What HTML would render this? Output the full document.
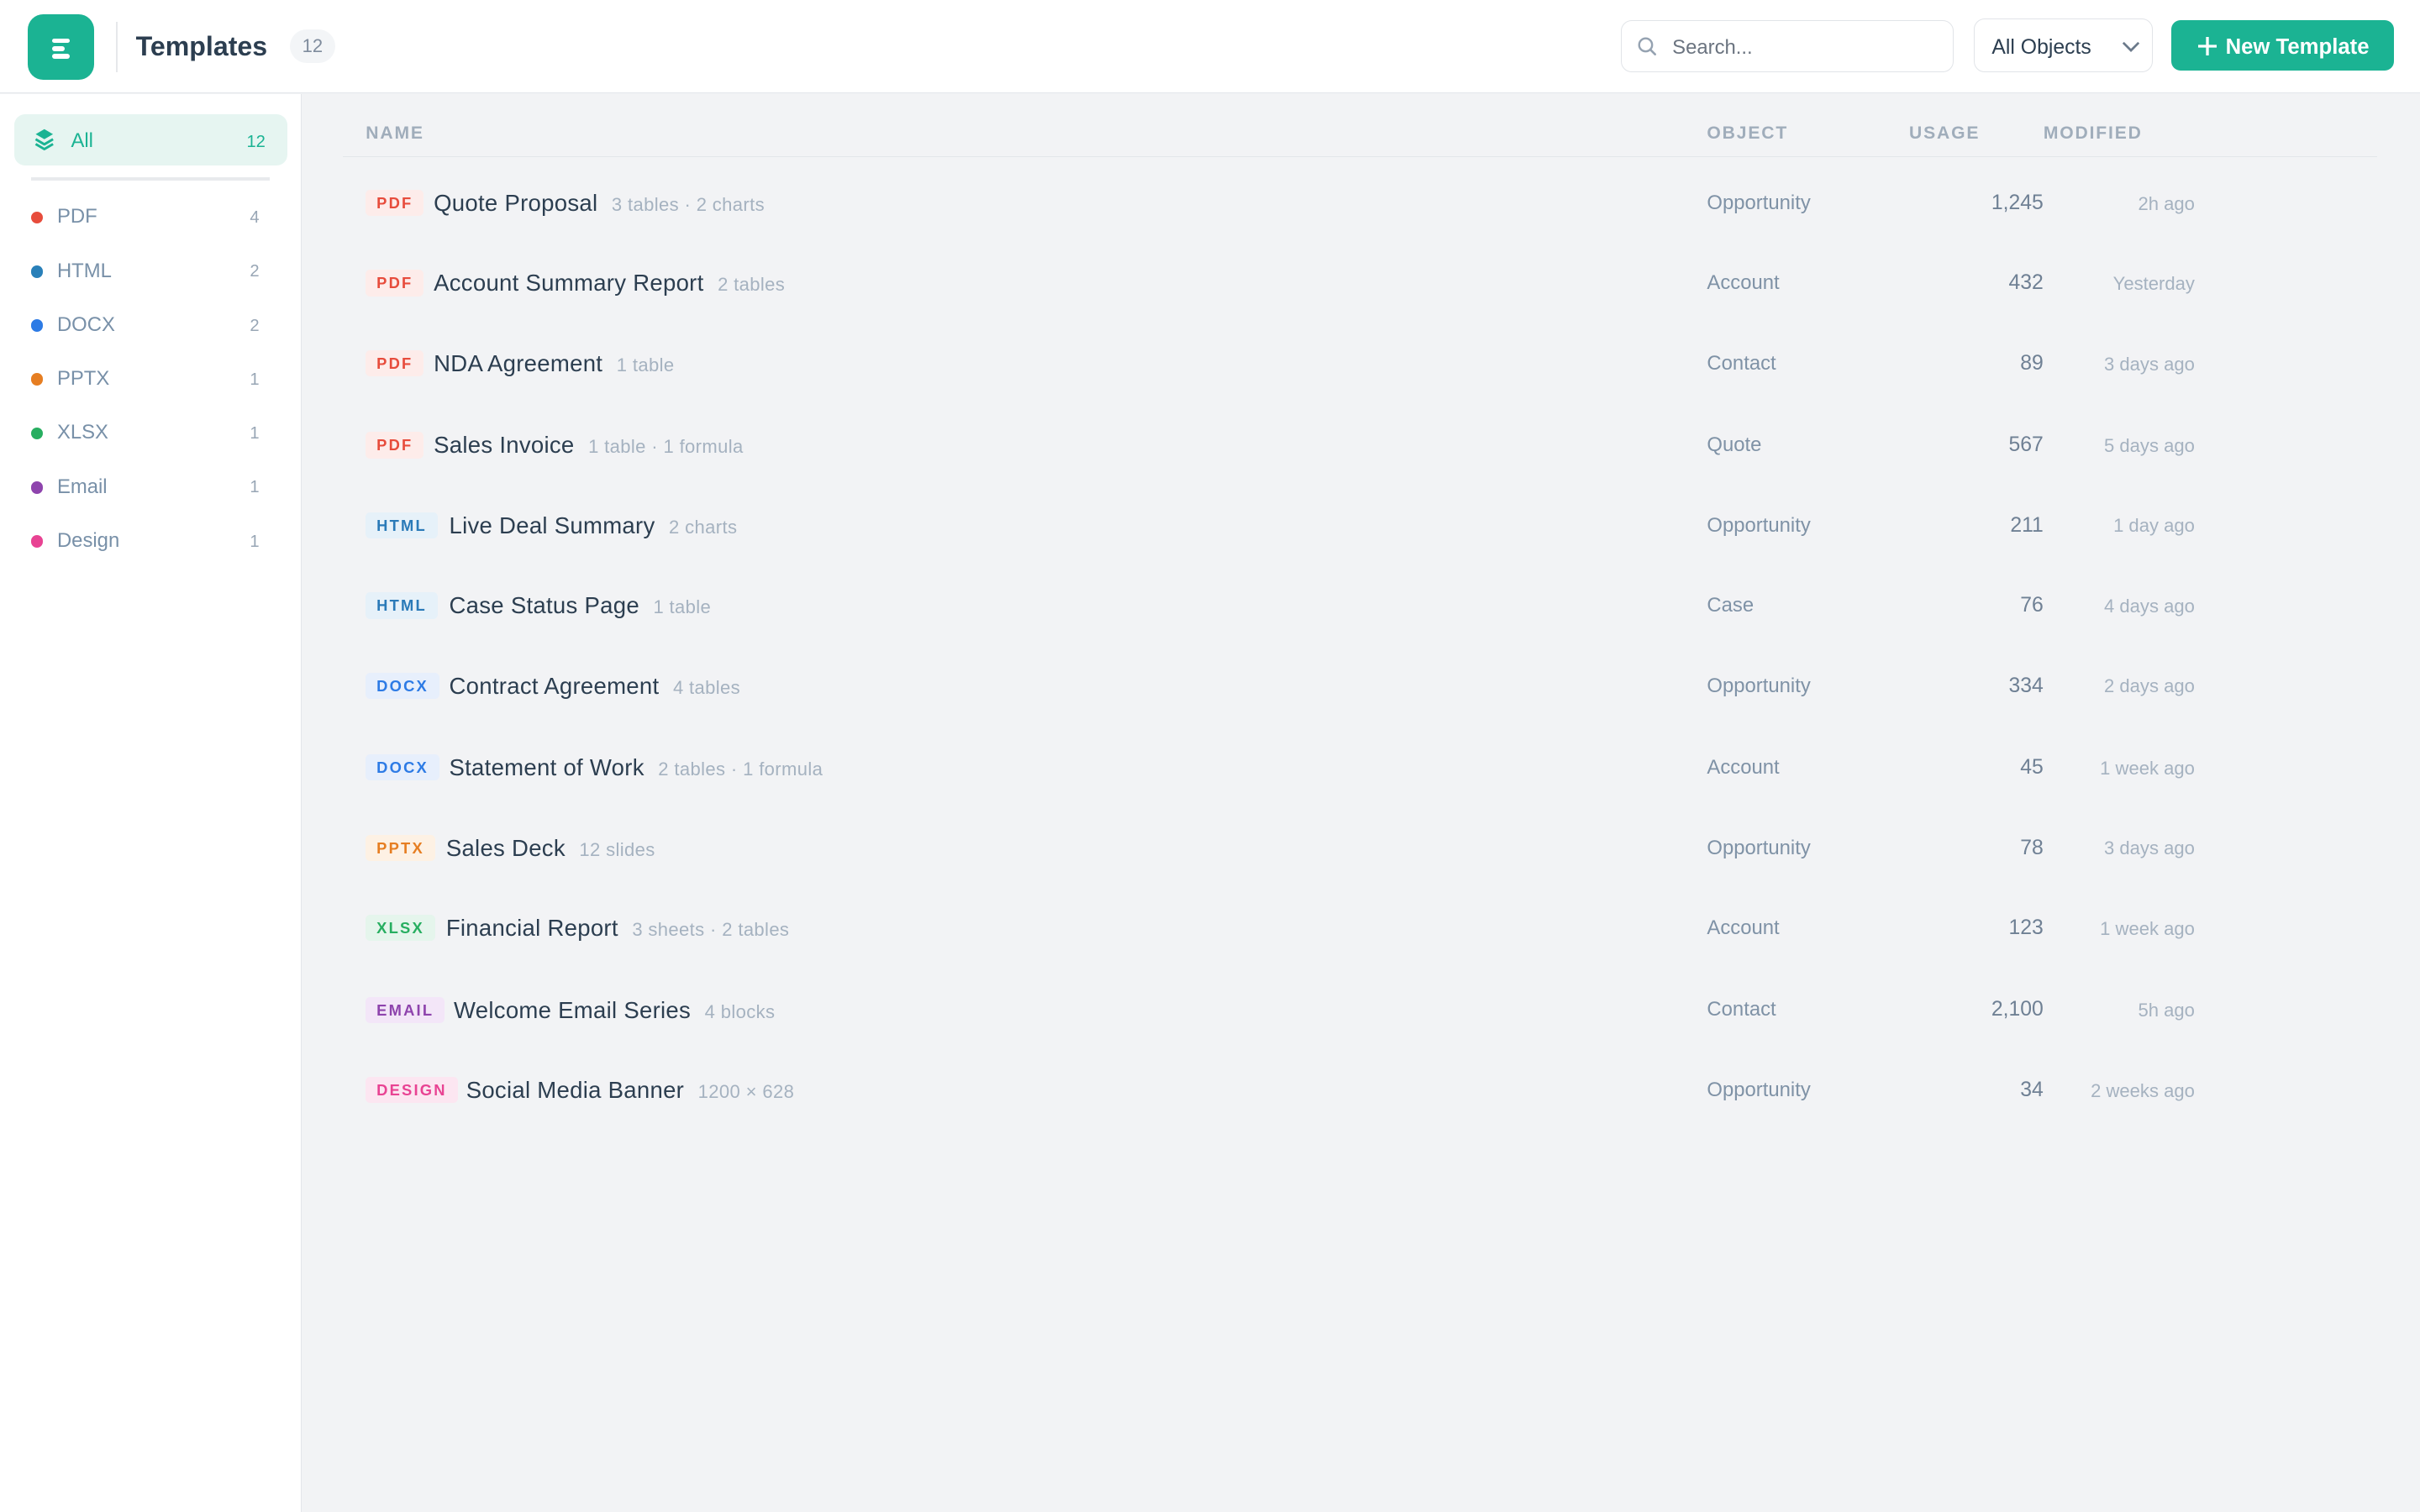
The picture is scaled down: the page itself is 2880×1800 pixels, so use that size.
<!DOCTYPE html>
<html><head><meta charset="utf-8">
<style>
html,body{margin:0;padding:0;}
body{width:1568px;height:980px;zoom:1.836735;background:#f2f3f5;font-family:"Liberation Sans",sans-serif;position:relative;overflow:hidden;color:#2c3e50;}
.top{position:absolute;left:0;top:0;width:1568px;height:60px;background:#fff;border-bottom:1px solid #e3e6ea;}
.logo{position:absolute;left:18px;top:9px;width:43px;height:43px;border-radius:10px;background:#1bb393;}
.logo i{position:absolute;left:16px;height:3px;border-radius:2px;background:#fff;}
.vsep{position:absolute;left:75px;top:14px;width:1px;height:33px;background:#e6e8eb;}
.title{position:absolute;left:88px;top:20px;font-size:17.5px;font-weight:bold;color:#2c3e50;}
.cnt{position:absolute;left:188px;top:19px;width:29px;height:22px;border-radius:11px;background:#f3f5f7;font-size:12px;color:#7f8c9d;text-align:center;line-height:22px;}
.search{position:absolute;left:1050px;top:13px;width:215px;height:33px;border:1px solid #e1e4e8;border-radius:7px;background:#fff;}
.search span{position:absolute;left:33px;top:10px;font-size:13px;color:#6b7480;}
.sel{position:absolute;left:1279px;top:12px;width:115px;height:34px;border:1px solid #e1e4e8;border-radius:7px;background:#fff;}
.sel span{position:absolute;left:11px;top:11px;font-size:13.5px;color:#2c3e50;}
.btn{position:absolute;left:1407px;top:13px;width:144px;height:33px;border-radius:6px;background:#1bb393;color:#fff;font-size:14px;font-weight:bold;}
.btn span{position:absolute;left:35px;top:10px;}
.side{position:absolute;left:0;top:61px;width:195px;height:919px;background:#fff;border-right:1px solid #e3e6ea;}
.all{position:absolute;left:9px;top:74px;width:177px;height:33px;border-radius:7px;background:#e6f5f1;}
.all .t{position:absolute;left:37px;top:10px;font-size:13px;color:#1bb393;}
.all .n{position:absolute;right:14px;top:12px;font-size:11px;color:#1bb393;}
.hsep{position:absolute;left:20px;top:115px;width:155px;height:2px;background:#e8eaed;}
.si{position:absolute;left:20px;width:150px;height:20px;}
.si b{position:absolute;left:0;top:6px;width:8px;height:8px;border-radius:50%;}
.si .t{position:absolute;left:17px;top:2px;font-size:13px;color:#7890a8;}
.si .n{position:absolute;right:2px;top:4px;font-size:11px;color:#98a6b5;}
.hd{position:absolute;top:80px;font-size:11.5px;letter-spacing:1px;color:#a0adbb;font-weight:bold;}
.hline{position:absolute;left:222px;top:101px;width:1318px;height:1px;background:#e3e6ea;}
.row{position:absolute;left:0;width:1568px;height:20px;}
.bd{position:absolute;left:237px;top:2px;height:17px;padding:0 7px;border-radius:3px;font-size:10px;font-weight:bold;letter-spacing:1.2px;line-height:17px;}
.nm{position:absolute;top:2px;font-size:15px;letter-spacing:0.15px;color:#2c3e50;white-space:nowrap;}
.nm em{font-style:normal;font-size:12px;letter-spacing:0.2px;color:#a5b2c0;margin-left:9px;}
.ob{position:absolute;left:1106px;top:3px;font-size:13px;color:#7f92a6;}
.us{position:absolute;right:244px;top:3px;font-size:13.5px;color:#6f8094;}
.md{position:absolute;right:146px;top:4px;font-size:12px;color:#a5b2c0;}
</style></head><body>
<div class="top">
<div class="logo"><i style="top:16px;width:11px"></i><i style="top:21px;width:8px"></i><i style="top:26px;width:11px"></i></div>
<div class="vsep"></div>
<div class="title">Templates</div>
<div class="cnt">12</div>
<div class="search"><svg width="14" height="14" viewBox="0 0 16 16" style="position:absolute;left:10px;top:10px"><circle cx="6.5" cy="6.5" r="4.8" fill="none" stroke="#95a2b1" stroke-width="1.5"/><path d="M10 10l3.5 3.5" stroke="#95a2b1" stroke-width="1.6" stroke-linecap="round"/></svg><span>Search...</span></div>
<div class="sel"><span>All Objects</span><svg width="12" height="8" viewBox="0 0 12 8" style="position:absolute;left:95px;top:14px"><path d="M1 1l5 5 5-5" fill="none" stroke="#6b7a8b" stroke-width="1.5"/></svg></div>
<div class="btn"><svg width="12" height="12" viewBox="0 0 12 12" style="position:absolute;left:17px;top:11px"><path d="M6 0v12M0 6h12" stroke="#fff" stroke-width="1.8"/></svg><span>New Template</span></div>
</div>
<div class="side"></div>
<div class="all"><svg width="15" height="15" viewBox="0 0 16 16" style="position:absolute;left:12px;top:9px"><path d="M8 1L2 4.5 8 8l6-3.5z" fill="#1bb393"/><path d="M2 8l6 3.5L14 8M2 11.3l6 3.5 6-3.5" fill="none" stroke="#1bb393" stroke-width="1.7" stroke-linejoin="round"/></svg><span class="t">All</span><span class="n">12</span></div>
<div class="hsep"></div>
<div class="si" style="top:131px"><b style="background:#e74c3c"></b><span class="t">PDF</span><span class="n">4</span></div>
<div class="si" style="top:166px"><b style="background:#2980b9"></b><span class="t">HTML</span><span class="n">2</span></div>
<div class="si" style="top:201px"><b style="background:#2d7be5"></b><span class="t">DOCX</span><span class="n">2</span></div>
<div class="si" style="top:236px"><b style="background:#e67e22"></b><span class="t">PPTX</span><span class="n">1</span></div>
<div class="si" style="top:271px"><b style="background:#27ae60"></b><span class="t">XLSX</span><span class="n">1</span></div>
<div class="si" style="top:306px"><b style="background:#8e44ad"></b><span class="t">Email</span><span class="n">1</span></div>
<div class="si" style="top:341px"><b style="background:#e84393"></b><span class="t">Design</span><span class="n">1</span></div>

<div class="hd" style="left:237px">NAME</div>
<div class="hd" style="left:1106px">OBJECT</div>
<div class="hd" style="left:1237px">USAGE</div>
<div class="hd" style="left:1324px">MODIFIED</div>
<div class="hline"></div>

<div class="row" style="top:121px"><span class="bd" style="background:#fdecea;color:#e74c3c">PDF</span><span class="nm" style="left:281px">Quote Proposal<em>3 tables · 2 charts</em></span><span class="ob">Opportunity</span><span class="us">1,245</span><span class="md">2h ago</span></div>
<div class="row" style="top:173px"><span class="bd" style="background:#fdecea;color:#e74c3c">PDF</span><span class="nm" style="left:281px">Account Summary Report<em>2 tables</em></span><span class="ob">Account</span><span class="us">432</span><span class="md">Yesterday</span></div>
<div class="row" style="top:225px"><span class="bd" style="background:#fdecea;color:#e74c3c">PDF</span><span class="nm" style="left:281px">NDA Agreement<em>1 table</em></span><span class="ob">Contact</span><span class="us">89</span><span class="md">3 days ago</span></div>
<div class="row" style="top:278px"><span class="bd" style="background:#fdecea;color:#e74c3c">PDF</span><span class="nm" style="left:281px">Sales Invoice<em>1 table · 1 formula</em></span><span class="ob">Quote</span><span class="us">567</span><span class="md">5 days ago</span></div>
<div class="row" style="top:330px"><span class="bd" style="background:#e6f1f9;color:#2a7ab8">HTML</span><span class="nm" style="left:291px">Live Deal Summary<em>2 charts</em></span><span class="ob">Opportunity</span><span class="us">211</span><span class="md">1 day ago</span></div>
<div class="row" style="top:382px"><span class="bd" style="background:#e6f1f9;color:#2a7ab8">HTML</span><span class="nm" style="left:291px">Case Status Page<em>1 table</em></span><span class="ob">Case</span><span class="us">76</span><span class="md">4 days ago</span></div>
<div class="row" style="top:434px"><span class="bd" style="background:#e7effc;color:#2d7be5">DOCX</span><span class="nm" style="left:291px">Contract Agreement<em>4 tables</em></span><span class="ob">Opportunity</span><span class="us">334</span><span class="md">2 days ago</span></div>
<div class="row" style="top:487px"><span class="bd" style="background:#e7effc;color:#2d7be5">DOCX</span><span class="nm" style="left:291px">Statement of Work<em>2 tables · 1 formula</em></span><span class="ob">Account</span><span class="us">45</span><span class="md">1 week ago</span></div>
<div class="row" style="top:539px"><span class="bd" style="background:#fdf1e4;color:#e67e22">PPTX</span><span class="nm" style="left:289px">Sales Deck<em>12 slides</em></span><span class="ob">Opportunity</span><span class="us">78</span><span class="md">3 days ago</span></div>
<div class="row" style="top:591px"><span class="bd" style="background:#e5f5ec;color:#27ae60">XLSX</span><span class="nm" style="left:289px">Financial Report<em>3 sheets · 2 tables</em></span><span class="ob">Account</span><span class="us">123</span><span class="md">1 week ago</span></div>
<div class="row" style="top:644px"><span class="bd" style="background:#f3e6f8;color:#8e44ad">EMAIL</span><span class="nm" style="left:294px">Welcome Email Series<em>4 blocks</em></span><span class="ob">Contact</span><span class="us">2,100</span><span class="md">5h ago</span></div>
<div class="row" style="top:696px"><span class="bd" style="background:#fce6f1;color:#e84393">DESIGN</span><span class="nm" style="left:302px">Social Media Banner<em>1200 × 628</em></span><span class="ob">Opportunity</span><span class="us">34</span><span class="md">2 weeks ago</span></div>
</body></html>
